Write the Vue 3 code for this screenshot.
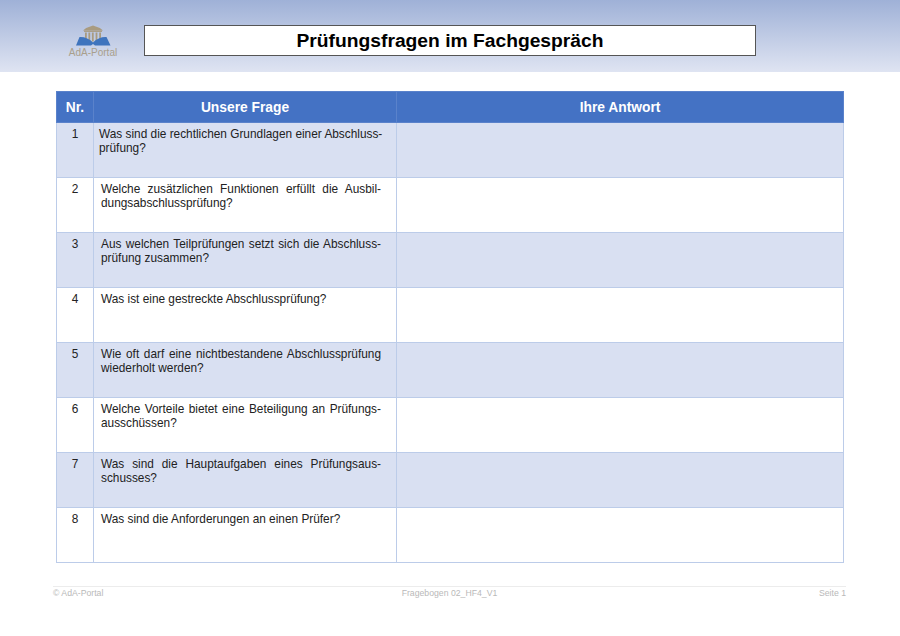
<script setup>
const rows = [
  { n: 1, q: ['Was sind die rechtlichen Grundlagen einer Abschluss-', 'prüfung?'], tight: true },
  { n: 2, q: ['Welche zusätzlichen Funktionen erfüllt die Ausbil-', 'dungsabschlussprüfung?'] },
  { n: 3, q: ['Aus welchen Teilprüfungen setzt sich die Abschluss-', 'prüfung zusammen?'] },
  { n: 4, q: ['Was ist eine gestreckte Abschlussprüfung?'] },
  { n: 5, q: ['Wie oft darf eine nichtbestandene Abschlussprüfung', 'wiederholt werden?'] },
  { n: 6, q: ['Welche Vorteile bietet eine Beteiligung an Prüfungs-', 'ausschüssen?'] },
  { n: 7, q: ['Was sind die Hauptaufgaben eines Prüfungsaus-', 'schusses?'] },
  { n: 8, q: ['Was sind die Anforderungen an einen Prüfer?'] },
]
</script>

<template>
  <div class="page">
    <header class="top">
      <div class="logo">
        <svg class="logo-mark" width="36" height="21" viewBox="0 0 36 21">
          <path d="M18 0.5 Q24 2 28 5.5 H8 Q12 2 18 0.5 Z" fill="#a99b80" />
          <rect x="9" y="5.5" width="18" height="1.4" fill="#a99b80" />
          <g fill="#a99b80">
            <rect x="10" y="7.5" width="1.8" height="7" />
            <rect x="13.4" y="7.5" width="1.8" height="8.5" />
            <rect x="16.9" y="7.5" width="1.8" height="9" />
            <rect x="20.6" y="7.5" width="1.8" height="8.5" />
            <rect x="24.2" y="7.5" width="1.8" height="7" />
          </g>
          <path d="M1 20.5 L4.5 12 Q12 11.5 18 17.5 Q24 11.5 31.5 12 L35.5 20.5 H20 L18 19 L16 20.5 Z" fill="#3f74bd" />
        </svg>
        <span class="logo-text">AdA-Portal</span>
      </div>
      <h1 class="title">Prüfungsfragen im Fachgespräch</h1>
    </header>

    <main class="main">
      <table class="qa">
        <colgroup>
          <col class="c1" />
          <col class="c2" />
          <col />
        </colgroup>
        <thead>
          <tr>
            <th>Nr.</th>
            <th>Unsere Frage</th>
            <th>Ihre Antwort</th>
          </tr>
        </thead>
        <tbody>
          <tr v-for="r in rows" :key="r.n" :class="{ odd: r.n % 2 === 1 }">
            <td class="num">{{ r.n }}</td>
            <td class="question" :class="{ tight: r.tight }">
              <div
                v-for="(l, i) in r.q"
                :key="i"
                :class="{ just: r.q.length > 1 && i === 0 && !r.tight, nowrap: r.tight }"
              >{{ l }}</div>
            </td>
            <td></td>
          </tr>
        </tbody>
      </table>
    </main>

    <footer class="foot">
      <span>© AdA-Portal</span>
      <span class="mid">Fragebogen 02_HF4_V1</span>
      <span class="right">Seite 1</span>
    </footer>
  </div>
</template>

<style scoped>
.page {
  width: 900px;
  height: 636px;
  overflow: hidden;
  background: #fff;
  font-family: "Liberation Sans", Arial, sans-serif;
}
.top {
  height: 72px;
  box-sizing: border-box;
  padding: 25px 0 0 144px;
  background: linear-gradient(#9fb1d7, #dfe4f2);
  position: relative;
}
.logo {
  position: absolute;
  left: 60px;
  top: 25px;
  width: 66px;
  display: flex;
  flex-direction: column;
  align-items: center;
}
.logo-text {
  font-size: 10px;
  line-height: 11px;
  color: #a99f8c;
  margin-top: 1px;
}
.title {
  margin: 0;
  box-sizing: border-box;
  width: 612px;
  height: 31px;
  border: 1px solid #555;
  background: #fff;
  color: #000;
  font-size: 19.25px;
  font-weight: 700;
  line-height: 30px;
  text-align: center;
}
.main {
  padding: 19px 56px 0;
}
.qa {
  width: 788px;
  border-collapse: collapse;
  table-layout: fixed;
  font-size: 11.85px;
  color: #222;
}
.c1 { width: 37px; }
.c2 { width: 303px; }
th {
  box-sizing: border-box;
  height: 31px;
  padding: 0;
  background: #4472c4;
  color: #fff;
  font-size: 13.8px;
  font-weight: 700;
  border: 1px solid #5a82cb;
}
td {
  box-sizing: border-box;
  height: 55px;
  padding: 0;
  vertical-align: top;
  border: 1px solid #bccce9;
}
tr.odd td {
  background: #d9e0f2;
}
.num {
  padding-top: 4px;
  line-height: 14px;
  text-align: center;
}
.question {
  padding: 4px 15px 0 7px;
  line-height: 14px;
}
.question.tight {
  padding-left: 5px;
}
.nowrap {
  white-space: nowrap;
}
.just {
  text-align: justify;
  text-align-last: justify;
}
.foot {
  margin: 23px 54px 0 53px;
  padding-top: 1px;
  border-top: 1px solid #ececec;
  display: grid;
  grid-template-columns: 1fr 1fr 1fr;
  font-size: 8.7px;
  line-height: 11px;
  color: #b9b9b9;
}
.mid { text-align: center; }
.right { text-align: right; }
</style>
